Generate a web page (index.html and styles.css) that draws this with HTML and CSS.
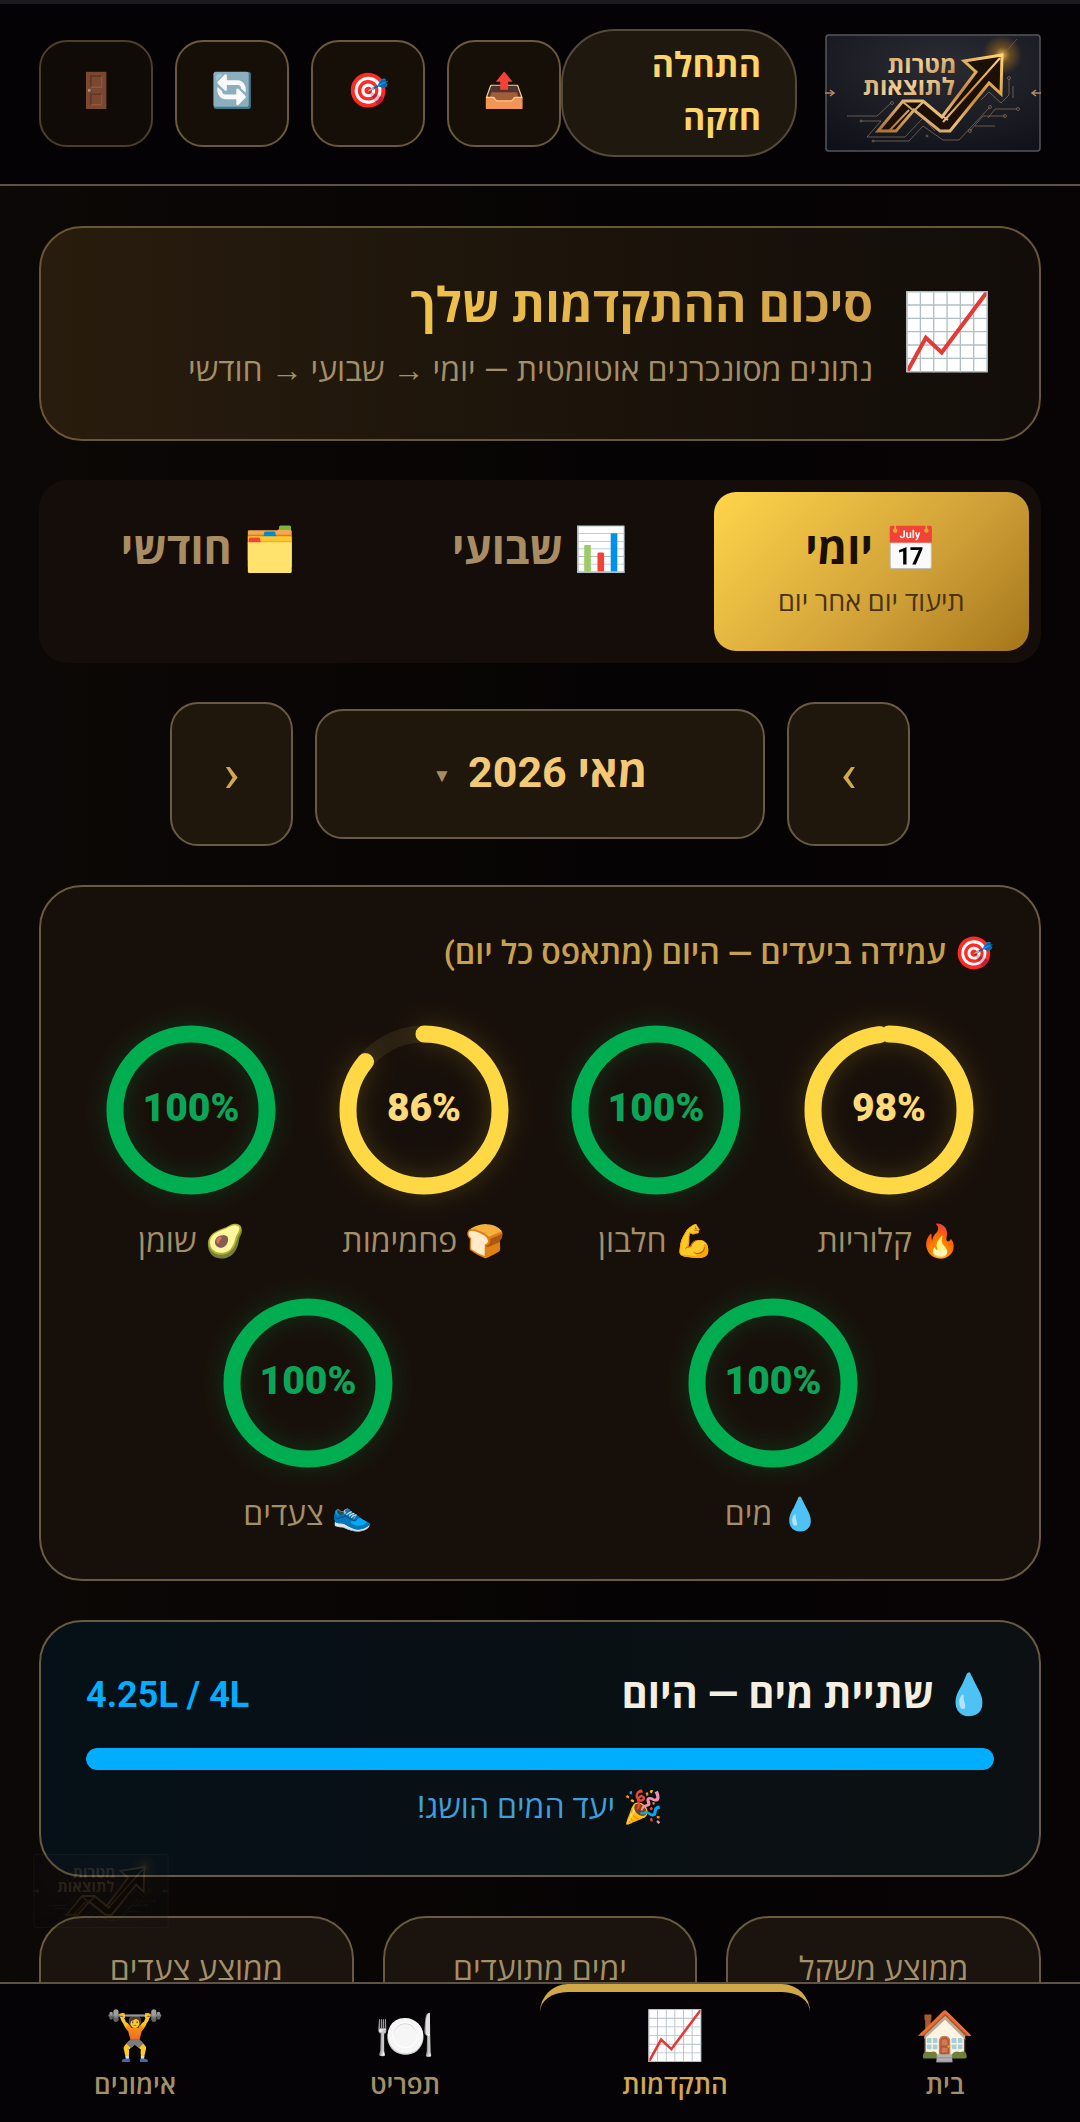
FILE: index.html
```html
<!DOCTYPE html>
<html lang="he" dir="rtl">
<head>
  <meta charset="UTF-8" />
  <meta name="viewport" content="width=device-width, initial-scale=1.0"/>
  <title>מטרות לתוצאות</title>
  <link rel="stylesheet" href="styles.css">
</head>
<body>

<header class="topbar">
  <svg class="logo" viewBox="0 0 216 118" role="img" aria-label="מטרות לתוצאות">
    <defs>
      <linearGradient id="gold" x1="0" y1="1" x2="1" y2="0">
        <stop offset="0" stop-color="#a8703a"/>
        <stop offset="0.35" stop-color="#e9bd7c"/>
        <stop offset="0.6" stop-color="#c88a3c"/>
        <stop offset="1" stop-color="#ffd574"/>
      </linearGradient>
      <linearGradient id="goldText" x1="0" y1="0" x2="1" y2="1">
        <stop offset="0" stop-color="#c99a62"/>
        <stop offset="0.5" stop-color="#f0d095"/>
        <stop offset="1" stop-color="#b07b42"/>
      </linearGradient>
      <radialGradient id="night" cx="0.55" cy="0.25" r="0.9">
        <stop offset="0" stop-color="#2b2b33"/>
        <stop offset="1" stop-color="#0e1018"/>
      </radialGradient>
      <radialGradient id="flare">
        <stop offset="0" stop-color="#ffd060" stop-opacity="0.9"/>
        <stop offset="0.4" stop-color="#d08a20" stop-opacity="0.4"/>
        <stop offset="1" stop-color="#d08a20" stop-opacity="0"/>
      </radialGradient>
    </defs>
    <g id="logo-art">
      <rect x="1" y="1" width="214" height="116" rx="3" fill="url(#night)" stroke="#55555a" stroke-width="1.5"/>
      <g fill="none" stroke="#7d6a58" stroke-width="0.8">
        <path d="M22 82H52L66 69M36 87H56L42 103H80L98 84L110 97M48 107H84L98 92L118 106H134L164 74M145 97L158 82H180M163 84L170 75H192M156 66L164 58L176 69L184 61V45M188 52V64M150 92H170"/>
        <circle cx="67" cy="69" r="1.5"/><circle cx="36" cy="87" r="1"/><circle cx="48" cy="107" r="1"/>
        <circle cx="145" cy="97" r="1.5"/><circle cx="180" cy="82" r="1.5"/><circle cx="193" cy="75" r="1.5"/>
        <circle cx="165" cy="73" r="1.5"/><circle cx="184" cy="44" r="1.5"/><circle cx="102" cy="102" r="1"/>
      </g>
      <circle cx="177" cy="21" r="20" fill="url(#flare)"/>
      <path d="M178 21L192 5" stroke="#8a6a3c" stroke-width="0.6"/>
      <path d="M177 21L139 27L151 38L117 83L98 67H78L53 97H71L89 76L115 97H125L164 49L176 60Z" fill="#1c0f06" stroke="url(#gold)" stroke-width="3"/>
      <path d="M175 24L118 88M84 76L64 97M78 68L89 77L98 68M117 82L123 86" fill="none" stroke="url(#gold)" stroke-width="2"/>
      <g class="logo-text" fill="url(#goldText)">
        <text x="97" y="39">מטרות</text>
        <text x="84" y="61">לתוצאות</text>
      </g>
      <path d="M0 59H8M5 56L9 59L5 62M216 59H208M211 56L207 59L211 62" fill="none" stroke="#b48c60" stroke-width="1.5"/>
    </g>
  </svg>
  <div class="streak">התחלה חזקה</div>
  <div class="actions">
    <button class="icon-btn" aria-label="שיתוף">📤</button>
    <button class="icon-btn" aria-label="יעדים">🎯</button>
    <button class="icon-btn" aria-label="רענון">🔄</button>
    <button class="icon-btn exit" aria-label="יציאה">🚪</button>
  </div>
</header>

<main class="content">

  <section class="hero">
    <span class="hero-icon">📈</span>
    <div>
      <h1>סיכום ההתקדמות שלך</h1>
      <p>נתונים מסונכרנים אוטומטית — יומי → שבועי → חודשי</p>
    </div>
  </section>

  <div class="tabs">
    <button class="tab active">📅 יומי<small>תיעוד יום אחר יום</small></button>
    <button class="tab">📊 שבועי</button>
    <button class="tab">🗂️ חודשי</button>
  </div>

  <div class="month-nav">
    <button class="arrow" aria-label="חודש קודם">›</button>
    <button class="month">מאי 2026 <span class="caret">▼</span></button>
    <button class="arrow" aria-label="חודש הבא">‹</button>
  </div>

  <section class="card">
    <h2>🎯 עמידה ביעדים — היום (מתאפס כל יום)</h2>
    <div class="rings">
      <div class="ring gold">
        <svg viewBox="0 0 194 194">
          <circle class="track" cx="97" cy="97" r="76"/>
          <circle class="value" cx="97" cy="97" r="76" pathLength="100" stroke-dasharray="98 100"/>
          <text x="97" y="108">98%</text>
        </svg>
        <span>🔥 קלוריות</span>
      </div>
      <div class="ring green">
        <svg viewBox="0 0 194 194">
          <circle class="value" cx="97" cy="97" r="76"/>
          <text x="97" y="108">100%</text>
        </svg>
        <span>💪 חלבון</span>
      </div>
      <div class="ring gold">
        <svg viewBox="0 0 194 194">
          <circle class="track" cx="97" cy="97" r="76"/>
          <circle class="value" cx="97" cy="97" r="76" pathLength="100" stroke-dasharray="86 100"/>
          <text x="97" y="108">86%</text>
        </svg>
        <span>🍞 פחמימות</span>
      </div>
      <div class="ring green">
        <svg viewBox="0 0 194 194">
          <circle class="value" cx="97" cy="97" r="76"/>
          <text x="97" y="108">100%</text>
        </svg>
        <span>🥑 שומן</span>
      </div>
      <div class="ring green">
        <svg viewBox="0 0 194 194">
          <circle class="value" cx="97" cy="97" r="76"/>
          <text x="97" y="108">100%</text>
        </svg>
        <span>💧 מים</span>
      </div>
      <div class="ring green">
        <svg viewBox="0 0 194 194">
          <circle class="value" cx="97" cy="97" r="76"/>
          <text x="97" y="108">100%</text>
        </svg>
        <span>👟 צעדים</span>
      </div>
    </div>
  </section>

  <section class="card water">
    <div class="water-head">
      <h3>💧 שתיית מים — היום</h3>
      <span class="amount" dir="ltr">4.25L / 4L</span>
    </div>
    <div class="bar"><div class="fill" style="width: 100%"></div></div>
    <p>🎉 יעד המים הושג!</p>
  </section>

  <div class="stats">
    <div class="stat">ממוצע משקל</div>
    <div class="stat">ימים מתועדים</div>
    <div class="stat">ממוצע צעדים</div>
  </div>

</main>

<svg class="watermark" viewBox="0 0 216 118" aria-hidden="true"><use href="#logo-art"/></svg>

<nav class="bottom-nav">
  <a href="#home"><span>🏠</span>בית</a>
  <a href="#progress" class="active"><span>📈</span>התקדמות</a>
  <a href="#menu"><span>🍽️</span>תפריט</a>
  <a href="#training"><span>🏋️</span>אימונים</a>
</nav>

</body>
</html>
```
FILE: styles.css
```css
* {
  box-sizing: border-box;
}

body {
  margin: 0;
  height: 100vh;
  display: flex;
  flex-direction: column;
  font-family: Roboto, "Open Sans", sans-serif;
  font-size: 32px;
  line-height: 46px;
  color: #a39068;
  background: linear-gradient(90deg, #0c0806, #060304 60%, #080405);
}

h1, h2, h3, p {
  margin: 0;
}

button {
  font-family: inherit;
  color: inherit;
  cursor: pointer;
}

/* header */
.topbar {
  display: flex;
  align-items: center;
  padding: 25px 39px 27px;
  border-top: 4px solid #1c1a1e;
  border-bottom: 2px solid #5c5346;
  background: #040204;
}

.logo {
  width: 216px;
  height: 118px;
  margin-left: 28px;
}

.logo-text {
  font-family: "Open Sans", sans-serif;
  font-size: 24px;
  font-weight: 700;
  direction: rtl;
  text-anchor: middle;
}

.streak {
  flex: 1;
  padding: 8px 34px 10px;
  border: 2px solid #54493a;
  border-radius: 54px;
  background: #1e180e;
  color: #ffd567;
  font-size: 34px;
  font-weight: 700;
  line-height: 53px;
}

.actions {
  display: flex;
  gap: 22px;
}

.icon-btn {
  width: 114px;
  height: 107px;
  padding: 0 0 6px;
  border: 2px solid #6b593a;
  border-radius: 28px;
  background: #160f08;
  font-size: 34px;
}

.exit {
  opacity: 0.7;
}

/* page */
.content {
  flex: 1;
  min-height: 0;
  overflow: hidden;
  display: flex;
  flex-direction: column;
  gap: 39px;
  padding: 40px 39px 0;
}

.content > * {
  flex-shrink: 0;
}

.hero {
  display: flex;
  align-items: center;
  gap: 28px;
  padding: 42px 46px 38px;
  border: 2px solid #695537;
  border-radius: 43px;
  background: linear-gradient(90deg, #281c0d, #120d09);
}

.hero-icon {
  font-size: 74px;
  line-height: 84px;
  padding-bottom: 8px;
}

.hero h1 {
  font-size: 48px;
  line-height: 72px;
  background: linear-gradient(90deg, #ffd24a, #d1a24a);
  background-clip: text;
  -webkit-background-clip: text;
  color: transparent;
}

.hero p {
  padding: 5px 0 8px;
}

.tabs {
  display: flex;
  gap: 16px;
  padding: 12px;
  border-radius: 28px;
  background: #140d09;
}

.tab {
  flex: 1;
  display: flex;
  flex-direction: column;
  align-items: center;
  padding: 26px 12px;
  border: none;
  border-radius: 22px;
  background: none;
  color: #a98d62;
  font-size: 43px;
  font-weight: 700;
  line-height: 62px;
}

.tab small {
  font-size: 27px;
  font-weight: 400;
  line-height: 45px;
  color: #4a3211;
}

.tab.active {
  background: linear-gradient(135deg, #ffd54a, #d0a038 60%, #a4761a);
  color: #1a0f05;
}

.month-nav {
  display: flex;
  align-items: center;
  justify-content: center;
  gap: 22px;
}

.arrow,
.month {
  padding: 0 0 8px;
  border: 2px solid #695a42;
  border-radius: 28px;
  background: #1f160c;
}

.arrow {
  width: 123px;
  height: 144px;
  padding-bottom: 2px;
  color: #d0a850;
  font-size: 54px;
}

.month {
  width: 450px;
  height: 130px;
  color: #f3c976;
  font-size: 43px;
  font-weight: 700;
}

.caret {
  margin-right: 6px;
  color: #a98d62;
  font-size: 19px;
  vertical-align: middle;
}

.card {
  padding: 42px 45px;
  border: 2px solid #695a42;
  border-radius: 43px;
  background: #170f09;
}

.card h2 {
  color: #c9a04f;
  font-size: 32px;
  font-weight: 600;
  line-height: 48px;
}

.rings {
  display: flex;
  flex-wrap: wrap;
  justify-content: space-around;
  gap: 22px;
  margin-top: 36px;
}

.ring {
  display: flex;
  flex-direction: column;
  align-items: center;
  gap: 11px;
}

.ring svg {
  width: 194px;
  height: 194px;
  overflow: visible;
}

.ring circle {
  fill: none;
  stroke-width: 17px;
}

.ring .value {
  stroke-linecap: round;
  transform: rotate(-90deg);
  transform-origin: center;
}

.ring .track {
  stroke: #2a2012;
}

.ring text {
  direction: ltr;
  text-anchor: middle;
  font-size: 39px;
  font-weight: 900;
}

.gold .value {
  stroke: #ffd945;
  filter: drop-shadow(0 0 12px rgba(255, 217, 69, 0.2));
}

.gold text {
  fill: #ffda78;
}

.green .value {
  stroke: #00ad50;
  filter: drop-shadow(0 0 12px rgba(0, 173, 80, 0.25));
}

.green text {
  fill: #0aa557;
}

.water {
  padding: 44px 45px 45px;
  background: linear-gradient(90deg, #061018, #0c1012);
}

.water-head {
  display: flex;
  align-items: center;
  justify-content: space-between;
  line-height: 58px;
}

.water h3 {
  color: #f5efe2;
  font-size: 40px;
}

.amount {
  color: #00adff;
  font-size: 36px;
  font-weight: 700;
}

.bar {
  height: 22px;
  margin: 24px 0 14px;
  border-radius: 11px;
  background: #10202c;
  overflow: hidden;
}

.fill {
  height: 100%;
  border-radius: 11px;
  background: #00adff;
}

.water p {
  color: #3e9fdc;
  text-align: center;
}

.stats {
  display: flex;
  gap: 29px;
}

.stat {
  flex: 1;
  height: 190px;
  padding-top: 28px;
  border: 2px solid #695a42;
  border-radius: 43px;
  background: #1b130e;
  text-align: center;
}

.watermark {
  position: fixed;
  left: 33px;
  bottom: 194px;
  width: 136px;
  height: 74px;
  opacity: 0.14;
}

/* bottom navigation */
.bottom-nav {
  display: flex;
  border-top: 2px solid #5c5346;
  background: #050305;
}

.bottom-nav a {
  flex: 1;
  display: flex;
  flex-direction: column;
  align-items: center;
  padding: 14px 0 18px;
  border-top: 8px solid transparent;
  border-radius: 28px 28px 0 0;
  color: #a39068;
  font-size: 26px;
  font-weight: 600;
  line-height: 38px;
  text-decoration: none;
}

.bottom-nav span {
  font-size: 48px;
  font-weight: 400;
  line-height: 60px;
}

.bottom-nav .active {
  border-top-color: #d0a848;
  color: #d2a854;
}
```
